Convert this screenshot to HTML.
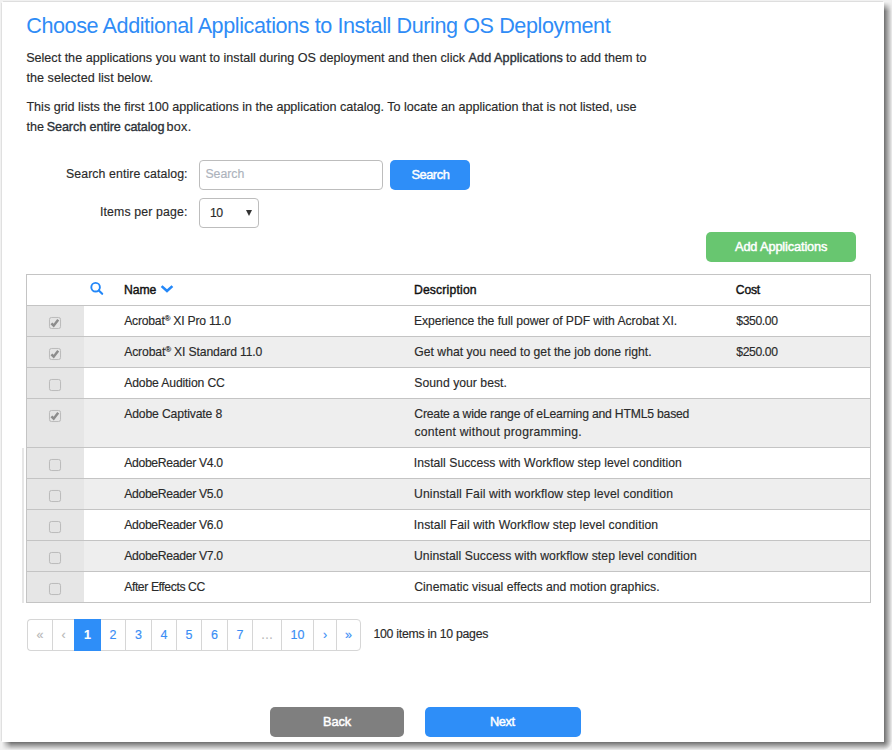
<!DOCTYPE html>
<html><head><meta charset="utf-8">
<style>
*{margin:0;padding:0;box-sizing:border-box}
html,body{width:892px;height:750px;overflow:hidden;background:#f1f1f1;font-family:"Liberation Sans",sans-serif;color:#333}
.page{position:absolute;left:2px;top:2px;width:882px;height:740px;background:#fff}
.a{position:absolute;white-space:nowrap;line-height:20px;height:20px;-webkit-text-stroke:0.15px currentColor}
.bx{position:absolute;border:1px solid #bdbdbd;border-radius:4px;background:#fff}
.btn{position:absolute;border-radius:5px}
.hl{position:absolute;height:1px;background:#c4c4c4}
.vl{position:absolute;width:1px;background:#c4c4c4}
.bg{position:absolute}
.cb{position:absolute;width:12px;height:12px;border:1px solid #bcbcbc;border-radius:2.5px;background:#e4e4e4;box-shadow:0 0 1px rgba(0,0,0,.08)}
.pg{position:absolute;height:32px;border-top:1px solid #d6d6d6;border-bottom:1px solid #d6d6d6;border-left:1px solid #d6d6d6}
sup{font-size:8px;vertical-align:top;position:relative;top:-2px}
</style></head><body>
<div class="page"></div>
<div style="position:absolute;left:3px;top:1px;width:880px;height:1px;background:#dedede"></div>
<div style="position:absolute;left:1px;top:3px;width:1px;height:738px;background:#e0e0e0"></div>
<div style="position:absolute;left:884px;top:2px;width:8px;height:740px;background:linear-gradient(to right,#6e6e6e,#eeeeee);-webkit-mask-image:linear-gradient(to bottom,transparent 0,#000 9px)"></div>
<div style="position:absolute;left:2px;top:742px;width:882px;height:8px;background:linear-gradient(to bottom,#6e6e6e,#eeeeee);-webkit-mask-image:linear-gradient(to right,transparent 0,#000 9px)"></div>
<div style="position:absolute;left:884px;top:742px;width:8px;height:8px;background:radial-gradient(circle at 0 0,#707070 0,#f2f2f2 8px)"></div>
<div class="a" style="left:26.22px;top:16px;font-size:21.6px;letter-spacing:-0.415px;color:#2f8cf6;-webkit-text-stroke:0;">Choose Additional Applications to Install During OS Deployment</div>
<div class="a" style="left:26.13px;top:48px;font-size:12.6px;letter-spacing:-0.000px;color:#2a2a2a;">Select the applications you want to install during OS deployment and then click</div>
<div class="a" style="left:468.60px;top:48px;font-size:12.6px;letter-spacing:0.071px;color:#2b3138;-webkit-text-stroke:0.35px #2b3138;">Add Applications</div>
<div class="a" style="left:566.11px;top:48px;font-size:12.6px;letter-spacing:-0.012px;color:#2a2a2a;">to add them to</div>
<div class="a" style="left:26.51px;top:68px;font-size:12.6px;letter-spacing:0.024px;color:#2a2a2a;">the selected list below.</div>
<div class="a" style="left:26.45px;top:97px;font-size:12.6px;letter-spacing:-0.013px;color:#2a2a2a;">This grid lists the first 100 applications in the application catalog. To locate an application that is not listed, use</div>
<div class="a" style="left:26.51px;top:117px;font-size:12.6px;letter-spacing:0.055px;color:#2a2a2a;">the</div>
<div class="a" style="left:46.63px;top:117px;font-size:12.6px;letter-spacing:-0.061px;color:#2b3138;-webkit-text-stroke:0.35px #2b3138;">Search entire catalog</div>
<div class="a" style="left:166.51px;top:117px;font-size:12.6px;letter-spacing:0.302px;color:#2a2a2a;">box.</div>
<div class="a" style="left:66.05px;top:164px;font-size:12.3px;letter-spacing:0.086px;color:#2a2a2a;">Search entire catalog:</div>
<div class="a" style="left:99.99px;top:202px;font-size:12.3px;letter-spacing:0.147px;color:#2a2a2a;">Items per page:</div>
<div class="bx" style="left:199px;top:160px;width:184px;height:30px"></div>
<div class="a" style="left:205.45px;top:164px;font-size:12.3px;letter-spacing:-0.028px;color:#adb3bc;">Search</div>
<div class="bx" style="left:199px;top:198px;width:60px;height:30px"></div>
<div class="a" style="left:210.08px;top:203px;font-size:12.3px;letter-spacing:-0.669px;color:#2a2a2a;">10</div>
<div class="a" style="left:246px;top:210px;width:0;height:0;border-left:3.5px solid transparent;border-right:3.5px solid transparent;border-top:6px solid #333"></div>
<div class="btn" style="left:390px;top:160px;width:80px;height:30px;background:#2e8ef8"></div>
<div class="a" style="left:411.42px;top:165px;font-size:12.8px;letter-spacing:-0.434px;color:#fff;-webkit-text-stroke:0.45px #fff;">Search</div>
<div class="btn" style="left:706px;top:232px;width:150px;height:30px;background:#68c670"></div>
<div class="a" style="left:735.00px;top:237px;font-size:12.8px;letter-spacing:-0.147px;color:#fff;-webkit-text-stroke:0.45px #fff;">Add Applications</div>
<div class="bg" style="left:27px;top:306px;width:57px;height:30px;background:#e6e6e6"></div>
<div class="bg" style="left:27px;top:337px;width:843px;height:30px;background:#eeeeee"></div>
<div class="bg" style="left:27px;top:337px;width:57px;height:30px;background:#e6e6e6"></div>
<div class="bg" style="left:27px;top:368px;width:57px;height:30px;background:#e6e6e6"></div>
<div class="bg" style="left:27px;top:399px;width:843px;height:48px;background:#eeeeee"></div>
<div class="bg" style="left:27px;top:399px;width:57px;height:48px;background:#e6e6e6"></div>
<div class="bg" style="left:27px;top:448px;width:57px;height:30px;background:#e6e6e6"></div>
<div class="bg" style="left:27px;top:479px;width:843px;height:30px;background:#eeeeee"></div>
<div class="bg" style="left:27px;top:479px;width:57px;height:30px;background:#e6e6e6"></div>
<div class="bg" style="left:27px;top:510px;width:57px;height:30px;background:#e6e6e6"></div>
<div class="bg" style="left:27px;top:541px;width:843px;height:30px;background:#eeeeee"></div>
<div class="bg" style="left:27px;top:541px;width:57px;height:30px;background:#e6e6e6"></div>
<div class="bg" style="left:27px;top:572px;width:57px;height:30px;background:#e6e6e6"></div>
<div class="hl" style="left:26px;top:274px;width:845px"></div>
<div class="hl" style="left:26px;top:305px;width:845px"></div>
<div class="hl" style="left:26px;top:336px;width:845px"></div>
<div class="hl" style="left:26px;top:367px;width:845px"></div>
<div class="hl" style="left:26px;top:398px;width:845px"></div>
<div class="hl" style="left:26px;top:447px;width:845px"></div>
<div class="hl" style="left:26px;top:478px;width:845px"></div>
<div class="hl" style="left:26px;top:509px;width:845px"></div>
<div class="hl" style="left:26px;top:540px;width:845px"></div>
<div class="hl" style="left:26px;top:571px;width:845px"></div>
<div class="hl" style="left:26px;top:602px;width:845px"></div>
<div class="vl" style="left:26px;top:274px;height:329px"></div>
<div class="vl" style="left:870px;top:274px;height:329px"></div>
<div class="vl" style="left:22px;top:448px;height:155px;width:2px;background:#e6e6e6"></div>
<svg class="a" style="left:89px;top:281px;height:16px" width="16" height="16" viewBox="0 0 16 16"><circle cx="6.6" cy="6.2" r="4.3" fill="none" stroke="#2387f8" stroke-width="1.9"/><line x1="9.8" y1="9.4" x2="13.2" y2="12.8" stroke="#2387f8" stroke-width="2.1" stroke-linecap="round"/></svg>
<div class="a" style="left:123.92px;top:280px;font-size:12.2px;letter-spacing:-0.016px;color:#111;-webkit-text-stroke:0.4px #111;">Name</div>
<svg class="a" style="left:160px;top:284px;height:10px" width="14" height="10" viewBox="0 0 14 10"><path d="M1.6 2.1 L7 7.0 L12.4 2.1" fill="none" stroke="#2387f8" stroke-width="2.6"/></svg>
<div class="a" style="left:413.92px;top:280px;font-size:12.2px;letter-spacing:0.174px;color:#111;-webkit-text-stroke:0.4px #111;">Description</div>
<div class="a" style="left:735.79px;top:280px;font-size:12.2px;letter-spacing:-0.200px;color:#111;-webkit-text-stroke:0.4px #111;">Cost</div>
<div class="cb" style="left:49px;top:317px"><svg class="a" style="left:0px;top:0px;height:10px" width="10" height="10" viewBox="0 0 10 10"><path d="M1.4 5.3 L3.7 7.7 L8.2 1.8" fill="none" stroke="#8c8c8c" stroke-width="2.5"/></svg></div>
<div class="a" style="left:124.20px;top:311px;font-size:12.2px;letter-spacing:-0.235px;color:#2a2a2a;">Acrobat<sup>®</sup> XI Pro 11.0</div>
<div class="a" style="left:413.92px;top:311px;font-size:12.2px;letter-spacing:-0.063px;color:#2a2a2a;">Experience the full power of PDF with Acrobat XI.</div>
<div class="a" style="left:736.28px;top:311px;font-size:12.2px;letter-spacing:-0.382px;color:#2a2a2a;">$350.00</div>
<div class="cb" style="left:49px;top:348px"><svg class="a" style="left:0px;top:0px;height:10px" width="10" height="10" viewBox="0 0 10 10"><path d="M1.4 5.3 L3.7 7.7 L8.2 1.8" fill="none" stroke="#8c8c8c" stroke-width="2.5"/></svg></div>
<div class="a" style="left:124.20px;top:342px;font-size:12.2px;letter-spacing:-0.154px;color:#2a2a2a;">Acrobat<sup>®</sup> XI Standard 11.0</div>
<div class="a" style="left:414.29px;top:342px;font-size:12.2px;letter-spacing:0.003px;color:#2a2a2a;">Get what you need to get the job done right.</div>
<div class="a" style="left:736.28px;top:342px;font-size:12.2px;letter-spacing:-0.382px;color:#2a2a2a;">$250.00</div>
<div class="cb" style="left:49px;top:379px"></div>
<div class="a" style="left:124.20px;top:373px;font-size:12.2px;letter-spacing:-0.146px;color:#2a2a2a;">Adobe Audition CC</div>
<div class="a" style="left:414.35px;top:373px;font-size:12.2px;letter-spacing:0.028px;color:#2a2a2a;">Sound your best.</div>
<div class="cb" style="left:49px;top:410px"><svg class="a" style="left:0px;top:0px;height:10px" width="10" height="10" viewBox="0 0 10 10"><path d="M1.4 5.3 L3.7 7.7 L8.2 1.8" fill="none" stroke="#8c8c8c" stroke-width="2.5"/></svg></div>
<div class="a" style="left:124.20px;top:404px;font-size:12.2px;letter-spacing:-0.143px;color:#2a2a2a;">Adobe Captivate 8</div>
<div class="a" style="left:414.29px;top:404px;font-size:12.2px;letter-spacing:-0.201px;color:#2a2a2a;">Create a wide range of eLearning and HTML5 based</div>
<div class="a" style="left:414.38px;top:422px;font-size:12.2px;letter-spacing:0.252px;color:#2a2a2a;">content without programming.</div>
<div class="cb" style="left:49px;top:459px"></div>
<div class="a" style="left:124.20px;top:453px;font-size:12.2px;letter-spacing:-0.320px;color:#2a2a2a;">AdobeReader V4.0</div>
<div class="a" style="left:413.80px;top:453px;font-size:12.2px;letter-spacing:0.027px;color:#2a2a2a;">Install Success with Workflow step level condition</div>
<div class="cb" style="left:49px;top:490px"></div>
<div class="a" style="left:124.20px;top:484px;font-size:12.2px;letter-spacing:-0.320px;color:#2a2a2a;">AdobeReader V5.0</div>
<div class="a" style="left:413.98px;top:484px;font-size:12.2px;letter-spacing:0.133px;color:#2a2a2a;">Uninstall Fail with workflow step level condition</div>
<div class="cb" style="left:49px;top:521px"></div>
<div class="a" style="left:124.20px;top:515px;font-size:12.2px;letter-spacing:-0.320px;color:#2a2a2a;">AdobeReader V6.0</div>
<div class="a" style="left:413.80px;top:515px;font-size:12.2px;letter-spacing:0.088px;color:#2a2a2a;">Install Fail with Workflow step level condition</div>
<div class="cb" style="left:49px;top:552px"></div>
<div class="a" style="left:124.20px;top:546px;font-size:12.2px;letter-spacing:-0.320px;color:#2a2a2a;">AdobeReader V7.0</div>
<div class="a" style="left:413.98px;top:546px;font-size:12.2px;letter-spacing:0.071px;color:#2a2a2a;">Uninstall Success with workflow step level condition</div>
<div class="cb" style="left:49px;top:583px"></div>
<div class="a" style="left:124.20px;top:577px;font-size:12.2px;letter-spacing:-0.405px;color:#2a2a2a;">After Effects CC</div>
<div class="a" style="left:414.29px;top:577px;font-size:12.2px;letter-spacing:0.021px;color:#2a2a2a;">Cinematic visual effects and motion graphics.</div>
<div class="pg" style="left:27px;top:619px;width:26px;border-radius:4px 0 0 4px"></div>
<div class="a" style="left:27px;top:625px;width:26px;text-align:center;font-size:12.5px;color:#b8b8b8">«</div>
<div class="pg" style="left:52px;top:619px;width:23px"></div>
<div class="a" style="left:52px;top:625px;width:23px;text-align:center;font-size:12.5px;color:#b8b8b8">‹</div>
<div class="pg" style="left:74px;top:619px;width:27px;background:#2e8ef8;border-color:#2e8ef8;z-index:2"></div>
<div class="a" style="left:74px;top:625px;width:27px;text-align:center;font-size:12.5px;font-weight:bold;color:#fff;z-index:3">1</div>
<div class="pg" style="left:100px;top:619px;width:26px"></div>
<div class="a" style="left:100px;top:625px;width:26px;text-align:center;font-size:12.5px;color:#3a8ef5">2</div>
<div class="pg" style="left:125px;top:619px;width:27px"></div>
<div class="a" style="left:125px;top:625px;width:27px;text-align:center;font-size:12.5px;color:#3a8ef5">3</div>
<div class="pg" style="left:151px;top:619px;width:26px"></div>
<div class="a" style="left:151px;top:625px;width:26px;text-align:center;font-size:12.5px;color:#3a8ef5">4</div>
<div class="pg" style="left:176px;top:619px;width:26px"></div>
<div class="a" style="left:176px;top:625px;width:26px;text-align:center;font-size:12.5px;color:#3a8ef5">5</div>
<div class="pg" style="left:201px;top:619px;width:27px"></div>
<div class="a" style="left:201px;top:625px;width:27px;text-align:center;font-size:12.5px;color:#3a8ef5">6</div>
<div class="pg" style="left:227px;top:619px;width:26px"></div>
<div class="a" style="left:227px;top:625px;width:26px;text-align:center;font-size:12.5px;color:#3a8ef5">7</div>
<div class="pg" style="left:252px;top:619px;width:30px"></div>
<div class="a" style="left:252px;top:625px;width:30px;text-align:center;font-size:12.5px;color:#b8b8b8">…</div>
<div class="pg" style="left:281px;top:619px;width:33px"></div>
<div class="a" style="left:281px;top:625px;width:33px;text-align:center;font-size:12.5px;color:#3a8ef5">10</div>
<div class="pg" style="left:313px;top:619px;width:24px"></div>
<div class="a" style="left:313px;top:625px;width:24px;text-align:center;font-size:12.5px;color:#3a8ef5">›</div>
<div class="pg" style="left:336px;top:619px;width:25px;border-right:1px solid #d6d6d6;border-radius:0 4px 4px 0"></div>
<div class="a" style="left:336px;top:625px;width:25px;text-align:center;font-size:12.5px;color:#3a8ef5">»</div>
<div class="a" style="left:373.48px;top:624px;font-size:12.3px;letter-spacing:-0.270px;color:#2a2a2a;">100 items in 10 pages</div>
<div class="btn" style="left:270px;top:707px;width:134px;height:30px;background:#7f7f7f"></div>
<div class="a" style="left:322.98px;top:712px;font-size:12.8px;letter-spacing:-0.119px;color:#fff;-webkit-text-stroke:0.45px #fff;">Back</div>
<div class="btn" style="left:425px;top:707px;width:156px;height:30px;background:#2e8ef8"></div>
<div class="a" style="left:489.88px;top:712px;font-size:12.8px;letter-spacing:-0.372px;color:#fff;-webkit-text-stroke:0.45px #fff;">Next</div>
</body></html>
